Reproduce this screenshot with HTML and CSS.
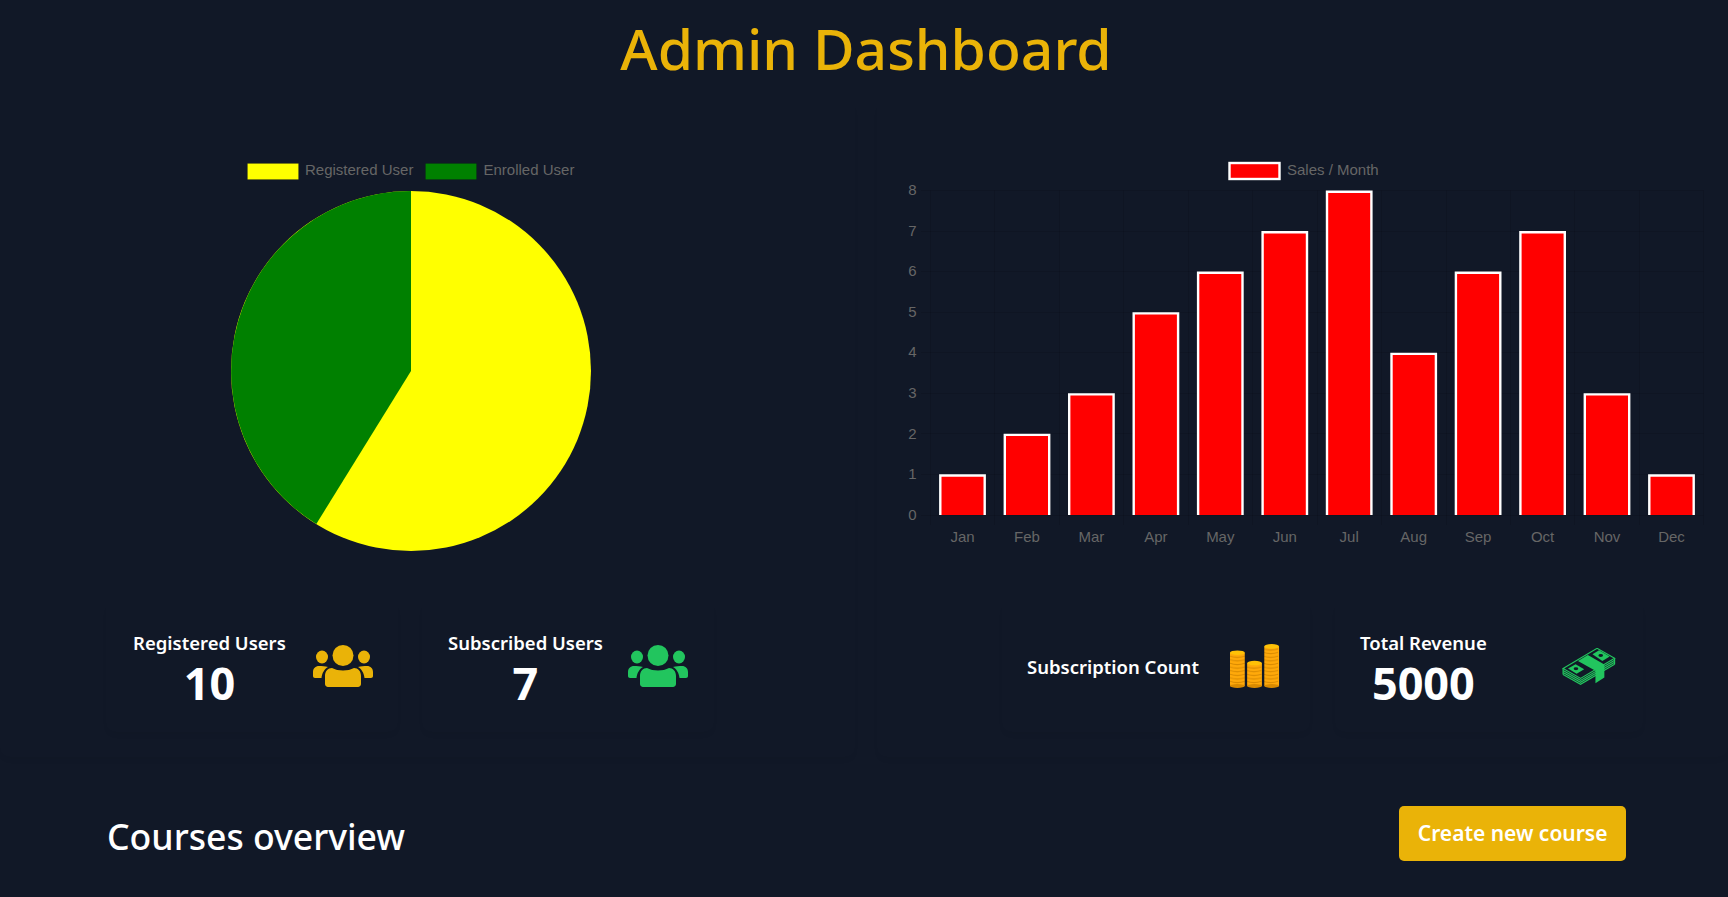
FILE: index.html
```html
<!DOCTYPE html>
<html lang="en">

<head>
    <meta charset="UTF-8">
    <meta name="viewport" content="width=device-width, initial-scale=1.0">
    <title>Admin Dashboard</title>
    <link rel="stylesheet" href="styles.css">
</head>

<body>

    <h1 class="page-title">Admin Dashboard</h1>

    <div class="overview">

        <section class="panel panel-users">
            <svg class="chart" width="822" height="410" viewBox="0 0 822 410">
                <rect class="legend-box" x="247.5" y="13.5" width="51" height="16" fill="#ff0"/>
                <text class="chart-text" x="305" y="25">Registered User</text>
                <rect class="legend-box" x="425.5" y="13.5" width="51" height="16" fill="#008000"/>
                <text class="chart-text" x="483.5" y="25">Enrolled User</text>
                <circle cx="411" cy="221" r="180" fill="#ff0"/>
                <path d="M411 221L316.300 374A180 180 0 0 1 411 41Z" fill="#008000"/>
            </svg>

            <div class="stats">
                <div class="stat-card card-registered">
                    <div class="stat-text">
                        <p class="stat-label">Registered Users</p>
                        <p class="stat-value">10</p>
                    </div>
                    <svg class="users-yellow" width="60" height="42" viewBox="0 0 60 42">
                        <use href="#users-icon"/>
                    </svg>
                </div>
                <div class="stat-card card-subscribed">
                    <div class="stat-text">
                        <p class="stat-label">Subscribed Users</p>
                        <p class="stat-value">7</p>
                    </div>
                    <svg class="users-green" width="60" height="42" viewBox="0 0 60 42">
                        <use href="#users-icon"/>
                    </svg>
                </div>
            </div>
        </section>

        <section class="panel panel-sales">
            <svg class="chart" width="800" height="410" viewBox="0 0 800 410">
                <rect x="324.500" y="13" width="50" height="16" fill="#f00" stroke="#fff" stroke-width="2.400"/>
                <text class="chart-text" x="382" y="25">Sales / Month</text>

                <path class="grid" d="M25.500 40.500V375M89.500 40.500V375M154.500 40.500V375M218.500 40.500V375M283.500 40.500V375M347.500 40.500V375M412.500 40.500V375M476.500 40.500V375M541.500 40.500V375M605.500 40.500V375M669.500 40.500V375M734.500 40.500V375M798.500 40.500V375"/>
                <path class="grid" d="M16 40.500H798.500M16 81.500H798.500M16 121.500H798.500M16 162.500H798.500M16 202.500H798.500M16 243.500H798.500M16 283.500H798.500M16 324.500H798.500M16 365.500H798.500"/>

                <g class="chart-text y-labels">
                    <text x="11.500" y="45">8</text>
                    <text x="11.500" y="86">7</text>
                    <text x="11.500" y="126">6</text>
                    <text x="11.500" y="167">5</text>
                    <text x="11.500" y="207">4</text>
                    <text x="11.500" y="248">3</text>
                    <text x="11.500" y="289">2</text>
                    <text x="11.500" y="329">1</text>
                    <text x="11.500" y="370">0</text>
                </g>

                <path class="bar" d="M35.300 365V325.500H79.700V365"/>
                <path class="bar" d="M99.800 365V284.900H144.200V365"/>
                <path class="bar" d="M164.200 365V244.400H208.600V365"/>
                <path class="bar" d="M228.700 365V163.400H273.100V365"/>
                <path class="bar" d="M293.100 365V122.800H337.500V365"/>
                <path class="bar" d="M357.600 365V82.300H402V365"/>
                <path class="bar" d="M422 365V41.800H466.400V365"/>
                <path class="bar" d="M486.500 365V203.900H530.900V365"/>
                <path class="bar" d="M550.900 365V122.800H595.300V365"/>
                <path class="bar" d="M615.400 365V82.300H659.800V365"/>
                <path class="bar" d="M679.800 365V244.400H724.200V365"/>
                <path class="bar" d="M744.300 365V325.500H788.700V365"/>

                <g class="chart-text x-labels">
                    <text x="57.500" y="392">Jan</text>
                    <text x="122" y="392">Feb</text>
                    <text x="186.400" y="392">Mar</text>
                    <text x="250.900" y="392">Apr</text>
                    <text x="315.300" y="392">May</text>
                    <text x="379.800" y="392">Jun</text>
                    <text x="444.200" y="392">Jul</text>
                    <text x="508.700" y="392">Aug</text>
                    <text x="573.100" y="392">Sep</text>
                    <text x="637.600" y="392">Oct</text>
                    <text x="702" y="392">Nov</text>
                    <text x="766.500" y="392">Dec</text>
                </g>
            </svg>

            <div class="stats">
                <div class="stat-card card-coins">
                    <div class="stat-text stat-single">
                        <p class="stat-label">Subscription Count</p>
                    </div>
                    <svg width="50" height="46" viewBox="0 0 52.500 46">
                        <defs>
                            <pattern id="coin-lines" width="17.500" height="3.800" patternUnits="userSpaceOnUse">
                                <rect width="17.500" height="3.800" fill="#ffa90a"/>
                                <path d="M0 1.200Q7.500 3.800 15.500 1.200" fill="none" stroke="#d98a00" stroke-width="1"/>
                            </pattern>
                        </defs>
                        <rect x="0" y="9" width="15.500" height="35" fill="url(#coin-lines)"/>
                        <ellipse cx="7.750" cy="44" rx="7.750" ry="2" fill="#d98a00"/>
                        <ellipse cx="7.750" cy="9" rx="7.750" ry="2.400" fill="#ffc107"/>
                        <rect x="18" y="20" width="15.500" height="24" fill="url(#coin-lines)"/>
                        <ellipse cx="25.750" cy="44" rx="7.750" ry="2" fill="#d98a00"/>
                        <ellipse cx="25.750" cy="20" rx="7.750" ry="2.400" fill="#ffc107"/>
                        <rect x="36" y="2.400" width="15.500" height="41.600" fill="url(#coin-lines)"/>
                        <ellipse cx="43.750" cy="44" rx="7.750" ry="2" fill="#d98a00"/>
                        <ellipse cx="43.750" cy="2.400" rx="7.750" ry="2.400" fill="#ffc107"/>
                    </svg>
                </div>
                <div class="stat-card card-money">
                    <div class="stat-text">
                        <p class="stat-label">Total Revenue</p>
                        <p class="stat-value">5000</p>
                    </div>
                    <svg class="icon-money" width="54" height="37" viewBox="35 41 161 112">
                        <path d="M37 109L90 139L193 78M37 115L90 145L193 84M37 121L90 151L193 90M37 103V121M193 72V90"/>
                        <path d="M37 103L140 42L193 72L90 133Z"/>
                        <path class="money-fill" d="M52 103L75 90L101 105L78 119Z"/>
                        <path class="money-fill" d="M126 60L146 48L178 67L156 80Z"/>
                        <path class="money-fill" d="M82 80L112 62L162 91V130L135 148V110Z"/>
                        <ellipse class="money-hole" cx="76" cy="104" rx="7" ry="4.500"/>
                        <ellipse class="money-hole" cx="151" cy="64" rx="7" ry="4.500"/>
                    </svg>
                </div>
            </div>
        </section>

    </div>

    <div class="courses-head">
        <h2>Courses overview</h2>
        <button type="button">Create new course</button>
    </div>

    <!-- shared drawing for the two users icons -->
    <svg class="icon-defs" width="0" height="0">
        <symbol id="users-icon" viewBox="0 0 60 42">
            <circle cx="30" cy="10.500" r="10.500"/>
            <ellipse cx="9" cy="12" rx="6" ry="6.400"/>
            <ellipse cx="51" cy="12" rx="6" ry="6.400"/>
            <path d="M12 31c0-5 3-8 7-8 3 1.700 7 2.500 11 2.500s8-.8 11-2.500c4 0 7 3 7 8v8c0 1.600-1.400 3-3 3H15c-1.600 0-3-1.400-3-3z"/>
            <path d="M0 27c0-3.500 2.500-6 6-6 3 0 6 0 9 1-3.500 2-6 6-6.500 11H2c-1.200 0-2-.8-2-2z"/>
            <path d="M60 27c0-3.500-2.500-6-6-6-3 0-6 0-9 1 3.500 2 6 6 6.500 11H58c1.200 0 2-.8 2-2z"/>
        </symbol>
    </svg>

</body>

</html>
```

FILE: styles.css
```css
* {
    box-sizing: border-box;
}

body {
    margin: 0;
    background-color: #111827;
    color: #fff;
    font-family: "Noto Sans", sans-serif;
}

.page-title {
    margin: 0;
    height: 100px;
    padding-left: 4px;
    line-height: 96px;
    text-align: center;
    font-size: 57px;
    font-weight: 500;
    color: #eab308;
}

.overview {
    display: grid;
    grid-template-columns: 855px 851px;
    column-gap: 22px;
}

.panel {
    padding-top: 50px;
    padding-bottom: 25px;
    border-radius: 10px;
    box-shadow: 0 4px 6px -2px rgba(0, 0, 0, 0.05);
}

.panel-sales {
    padding-left: 28px;
}

.chart {
    display: block;
}

.chart-text {
    font-family: "Liberation Sans", sans-serif;
    font-size: 15px;
    fill: #666;
}

.y-labels {
    text-anchor: end;
}

.x-labels {
    text-anchor: middle;
}

.legend-box {
    stroke: rgba(0, 0, 0, 0.1);
}

.grid {
    fill: none;
    stroke: rgba(0, 0, 0, 0.1);
}

.bar {
    fill: #f00;
    stroke: #fff;
    stroke-width: 2.4;
}

.stats {
    display: flex;
    margin-top: 40px;
}

.panel-users .stats {
    gap: 24px;
    padding-left: 106px;
}

.panel-sales .stats {
    gap: 25px;
    padding-left: 97px;
}

.stat-card {
    display: flex;
    justify-content: space-between;
    align-items: center;
    height: 132px;
    padding: 0 25px;
    border-radius: 10px;
    box-shadow: 0 4px 6px -2px rgba(0, 0, 0, 0.05);
}

.panel-users .stat-card {
    width: 292px;
}

.panel-sales .stat-card {
    width: 308px;
}

.panel-users .card-registered {
    padding-left: 27px;
}

.panel-users .card-subscribed {
    padding: 0 26px;
}

.panel-sales .card-coins {
    padding-right: 30px;
}

.panel-sales .card-money {
    padding-right: 27px;
}

.stat-text {
    text-align: center;
}

.stat-single {
    padding-top: 2px;
}

.stat-label {
    margin: 0;
    font-size: 18.5px;
    font-weight: 600;
    line-height: 26px;
}

.stat-value {
    margin: 2px 0 -6px;
    font-size: 45px;
    font-weight: 700;
    line-height: 50px;
}

.users-yellow {
    fill: #eab308;
}

.users-green {
    fill: #22c55e;
}

.icon-money path {
    fill: none;
    stroke: #22c55e;
    stroke-width: 3.5;
}

.icon-money .money-fill {
    fill: #22c55e;
    stroke: none;
}

.money-hole {
    fill: #111827;
}

.icon-defs {
    position: absolute;
}

.courses-head {
    display: flex;
    justify-content: space-between;
    align-items: center;
    margin-top: 49px;
    padding: 0 102px 0 107px;
}

.courses-head h2 {
    margin: 4px 0 0;
    font-size: 35.6px;
    font-weight: 500;
}

.courses-head button {
    height: 55px;
    padding: 0 18.5px 2px;
    border: none;
    border-radius: 5px;
    background-color: #eab308;
    color: #fff;
    font-family: "Noto Sans", sans-serif;
    font-size: 21px;
    font-weight: 600;
    cursor: pointer;
}
```
